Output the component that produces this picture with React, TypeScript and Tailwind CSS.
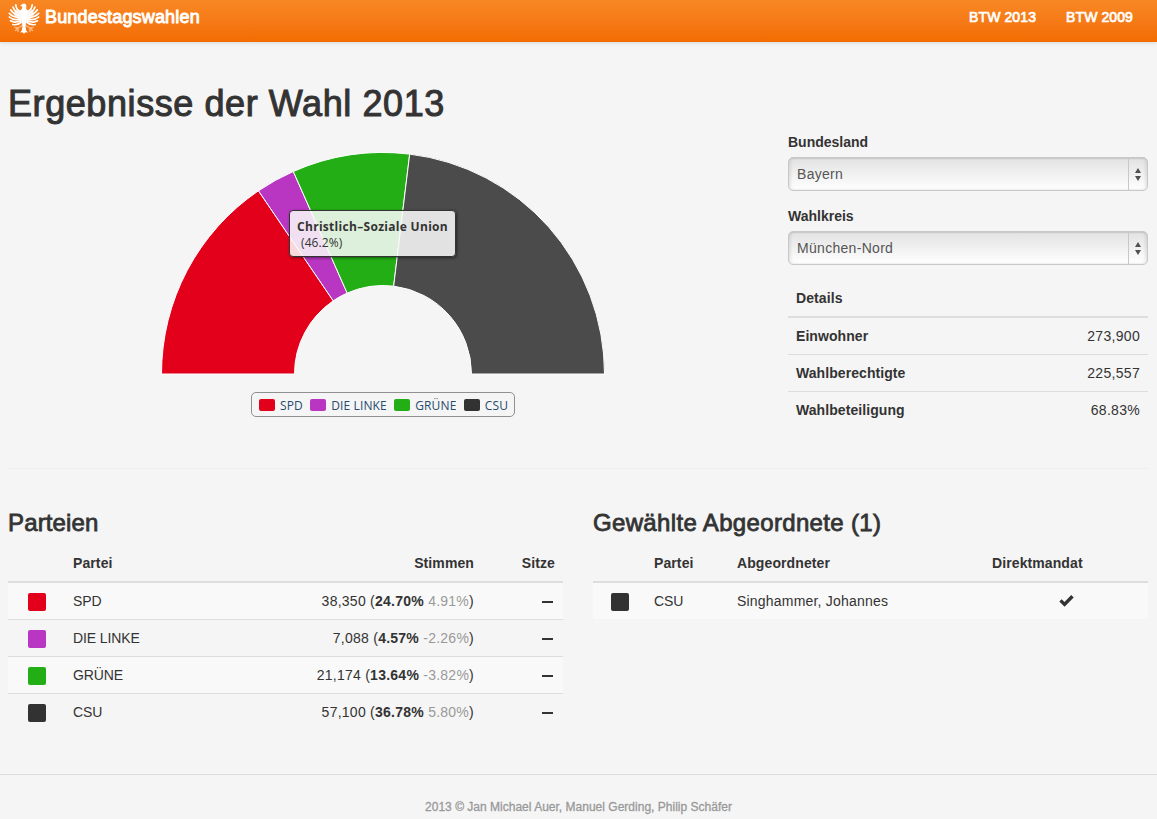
import React from "react";

const parties = [
  { name: "SPD", color: "#e2001a", votes: "38,350", share: "24.70%", diff: "4.91%", value: 24.7 },
  { name: "DIE LINKE", color: "#b836c2", votes: "7,088", share: "4.57%", diff: "-2.26%", value: 4.57 },
  { name: "GRÜNE", color: "#22ae14", votes: "21,174", share: "13.64%", diff: "-3.82%", value: 13.64 },
  { name: "CSU", color: "#323232", votes: "57,100", share: "36.78%", diff: "5.80%", value: 36.78 },
];

const details = [
  ["Einwohner", "273,900"],
  ["Wahlberechtigte", "225,557"],
  ["Wahlbeteiligung", "68.83%"],
];

function Eagle() {
  return (
    <svg className="h-8 w-8" viewBox="0 0 32 32" fill="none" stroke="#fff" strokeLinecap="round">
      <path d="M12 4l2-1.800c1.500-1.400 4-1 4.300 1.300l-.1 3.500c2 1 2.400 3 1.900 6l-2 7-.5 5 .7 3.500 1.500 2-2.300-.3-1.500 1.600-1.500-1.600-2.300.3 1.500-2 .7-3.500-.5-5-2-7c-.5-3-.1-5 1.900-6l.6-2.600z" fill="#fff" stroke="none" />
      <path d="M13 10L8 7.500 5.500 11l1.500 4 6 4zM19 10l5-2.500 2.500 3.500-1.500 4-6 4z" fill="#fff" fillOpacity=".75" stroke="none" />
      <g strokeWidth="1.700">
        <path d="M12.500 9.500C9.500 8.500 8 6 7.800 2.800M12 11.500C8.500 10.500 6 8 5 5M12 13.500C7.500 13 4.500 10.500 2.800 8M12 15.300C7.500 15.500 3.500 14 1.300 11.300M12.500 17C8.500 18 4 17.500 1.300 15M13 18.500C9.500 20.200 5.500 20.500 2.500 18.800M13.500 20C11 22.200 8 23.200 4.800 22.500" />
        <path d="M19.500 9.500C22.500 8.500 24 6 24.200 2.800M20 11.500C23.500 10.500 26 8 27 5M20 13.500C24.500 13 27.500 10.500 29.200 8M20 15.300C24.500 15.500 28.500 14 30.700 11.300M19.500 17C23.500 18 28 17.500 30.700 15M19 18.500C22.500 20.200 26.500 20.500 29.500 18.800M18.500 20C21 22.200 24 23.200 27.200 22.500" />
      </g>
      <path d="M14 23.500l-4 2.500-3-.5M10 26l-2.500 2.500M10 26v3.500M18 23.500l4 2.500 3-.5M22 26l2.500 2.500M22 26v3.500" strokeWidth="1.400" opacity=".5" />
    </svg>
  );
}

function Chart() {
  const total = parties.reduce((s, p) => s + p.value, 0);
  const at = (r: number, f: number) =>
    `${(375 - r * Math.cos(f * Math.PI)).toFixed(2)} ${(240 - r * Math.sin(f * Math.PI)).toFixed(2)}`;
  let sum = 0;
  return (
    <div className="relative h-[290px]">
      <svg width="750" height="241" viewBox="0 0 750 241" className="block">
        {parties.map((p) => {
          const a = sum / total;
          sum += p.value;
          const b = sum / total;
          return (
            <path
              key={p.name}
              d={`M${at(221.5, a)}A221.5 221.5 0 0 1 ${at(221.5, b)}L${at(88.5, b)}A88.5 88.5 0 0 0 ${at(88.5, a)}Z`}
              fill={p.name === "CSU" ? "#4b4b4b" : p.color}
              stroke="#fff"
              strokeWidth="1"
            />
          );
        })}
      </svg>
      <div className="mx-auto mt-[17px] flex h-[25px] w-[264px] items-center gap-[7.4px] rounded-[5px] border border-[#909090] pl-[7px] font-['Open_Sans',sans-serif] text-[12px] tracking-[0.12px] text-[#274b6d]">
        {parties.map((p) => (
          <div key={p.name} className="flex items-center gap-[5px] whitespace-nowrap">
            <i className="h-3 w-4 rounded-[2px]" style={{ background: p.color }} />
            <span className="pt-[2px]">{p.name}</span>
          </div>
        ))}
      </div>
      <div className="absolute left-[281px] top-[76px] h-[47px] w-[167px] rounded-[4px] border-[1.5px] border-[#333] bg-[#f9f9f9]/87 pl-[7px] pt-[8px] font-['Open_Sans',sans-serif] text-[12px] leading-4 text-[#333] shadow-[1px_1px_3px_rgba(0,0,0,0.5)]">
        <div className="whitespace-nowrap font-bold tracking-[0.3px]">Christlich–Soziale Union</div>
        <div className="pl-1 tracking-[0.1px]">(46.2%)</div>
      </div>
    </div>
  );
}

function Select({ label, value }: { label: string; value: string }) {
  return (
    <div className="mb-[15px]">
      <div className="mb-[5px] font-bold tracking-[0]">{label}</div>
      <div className="flex h-[34px] rounded-[5px] border border-[#c8c8c8] bg-linear-to-b from-[#e2e2e2] to-white shadow-[inset_0_1px_1px_rgba(0,0,0,0.06),inset_2px_0_3px_rgba(0,0,0,0.08),inset_-2px_0_3px_rgba(0,0,0,0.08)]">
        <div className="flex-1 pl-2 leading-8 tracking-[0.3px] text-[#555]">{value}</div>
        <div className="flex w-[19px] items-center justify-center border-l border-[#c8c8c8]">
          <svg width="6" height="13" viewBox="0 0 6 13" fill="#505050">
            <path d="M3 0l3 5H0zM0 8h6l-3 5z" />
          </svg>
        </div>
      </div>
    </div>
  );
}

export default function App() {
  return (
    <div className="h-[819px] w-[1157px] overflow-hidden bg-[#f5f5f5] font-['Liberation_Sans',Arial,sans-serif] text-[14px] leading-5 tracking-[0.1px] text-[#333]">
      <header className="flex h-[42px] bg-linear-to-b from-[#f88824] to-[#f36c00] pl-2 text-white shadow-[0_1px_4px_rgba(0,0,0,0.12)]">
        <div className="pt-[2px]"><Eagle /></div>
        <div className="ml-[5px] flex-1 pt-[7px] text-[18px] tracking-[0.17px] [-webkit-text-stroke:0.9px_white]">Bundestagswahlen</div>
        <nav className="flex gap-[30px] pr-6 pt-[7px] tracking-[0.1px] [-webkit-text-stroke:0.7px_white]">
          <span>BTW 2013</span>
          <span>BTW 2009</span>
        </nav>
      </header>

      <main className="ml-2 w-[1140px]">
        <section className="flex h-[427px] justify-between border-b border-[#eee]">
          <div className="w-[750px]">
            <h1 className="mt-[42px] h-[50px] text-[36px] leading-10 tracking-[0.58px] [-webkit-text-stroke:1px_#333]">Ergebnisse der Wahl 2013</h1>
            <Chart />
          </div>
          <div className="w-[360px] pt-[90px]">
            <Select label="Bundesland" value="Bayern" />
            <Select label="Wahlkreis" value="München-Nord" />
            <div className="border-b-2 border-[#ddd] px-2 py-2 font-bold">Details</div>
            {details.map(([k, v], i) => (
              <div key={k} className={i ? "flex justify-between border-t border-[#ddd] p-2" : "flex justify-between p-2"}>
                <b className="tracking-[0.07px]">{k}</b>
                <span className="tracking-[0.3px]">{v}</span>
              </div>
            ))}
          </div>
        </section>

        <section className="flex h-[305px] justify-between pt-[41px]">
          <div className="w-[555px]">
            <h2 className="mb-[9px] h-[26px] text-[24px] leading-[26px] tracking-[0.15px] [-webkit-text-stroke:0.8px_#333]">Parteien</h2>
            <div className="flex h-[38px] border-b-2 border-[#ddd] pt-2 font-bold">
              <div className="w-[65px]" />
              <div className="flex-1">Partei</div>
              <div className="w-[120px] text-right">Stimmen</div>
              <div className="w-[89px] pr-2 text-right">Sitze</div>
            </div>
            {parties.map((p, i) => (
              <div
                key={p.name}
                className={
                  (i ? "h-[37px] border-t border-[#ddd] " : "h-9 ") + (i % 2 ? "" : "bg-[#f9f9f9] ") + "flex pt-2"
                }
              >
                <div className="w-[65px] pl-5 pt-[2px]">
                  <div className="h-[18px] w-[18px] rounded-[2px]" style={{ background: p.color }} />
                </div>
                <div className="flex-1 tracking-[-0.1px]">{p.name}</div>
                <div className="w-[200px] text-right tracking-[0.25px]">
                  {p.votes} (<b>{p.share}</b> <span className="text-[#999]">{p.diff}</span>)
                </div>
                <div className="flex w-[89px] justify-end pr-[10px] pt-[10px]">
                  <div className="h-[2px] w-[11px] bg-[#333]" />
                </div>
              </div>
            ))}
          </div>

          <div className="w-[555px]">
            <h2 className="mb-[9px] h-[26px] text-[24px] leading-[26px] tracking-[0.34px] [-webkit-text-stroke:0.8px_#333]">Gewählte Abgeordnete (1)</h2>
            <div className="flex h-[38px] border-b-2 border-[#ddd] pt-2 font-bold">
              <div className="w-[61px]" />
              <div className="w-[83px]">Partei</div>
              <div className="w-[255px]">Abgeordneter</div>
              <div>Direktmandat</div>
            </div>
            <div className="flex h-9 bg-[#f9f9f9] pt-2">
              <div className="w-[61px] pl-[18px] pt-[2px]">
                <div className="h-[18px] w-[18px] rounded-[2px] bg-[#323232]" />
              </div>
              <div className="w-[83px] tracking-[-0.1px]">CSU</div>
              <div className="w-[322px] tracking-[0.2px]">Singhammer, Johannes</div>
              <svg className="mt-[4px]" width="15" height="12" viewBox="0 0 15 12" fill="#333">
                <path d="M.3 6.600L2.700 4.200 5.500 6.900 12.200.1l2.500 2.300L5.600 11.800z" />
              </svg>
            </div>
          </div>
        </section>
      </main>

      <footer className="h-[45px] border-t border-[#ddd] pt-[22px] text-center text-[12px] tracking-[0.01px] text-[#999] [-webkit-text-stroke:0.3px_#999]">
        2013 © Jan Michael Auer, Manuel Gerding, Philip Schäfer
      </footer>
    </div>
  );
}
